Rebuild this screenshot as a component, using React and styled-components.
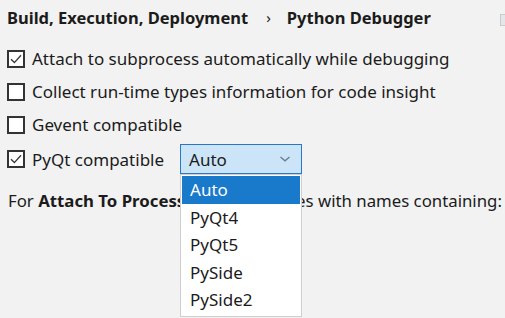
import styled, { createGlobalStyle } from "styled-components"

const GlobalStyle = createGlobalStyle`
  html, body {
    margin: 0;
    padding: 0;
    background: #f2f2f2;
  }
  body {
    font-family: "Noto Sans", "Open Sans", sans-serif;
    color: #1b1b1b;
    overflow: hidden;
  }
`

const options = ["Auto", "PyQt4", "PyQt5", "PySide", "PySide2"]

const Checkbox = ({ checked }) => (
  <Box>
    {checked && (
      <svg width="14" height="14" viewBox="0 0 14 14">
        <path d="M2 7.2 L5.4 10.6 L12 3.2" fill="none" stroke="#3a3a3a" strokeWidth="1.4" />
      </svg>
    )}
  </Box>
)

const App = () => {
  return <Page>
    <GlobalStyle />
    <Header>
      <Crumb>Build, Execution, Deployment</Crumb>
      <Sep>›</Sep>
      <Crumb>Python Debugger</Crumb>
      <Corner />
    </Header>
    <Options>
      <Row>
        <Checkbox checked />
        <Label>Attach to subprocess automatically while debugging</Label>
      </Row>
      <Row>
        <Checkbox />
        <Label>Collect run-time types information for code insight</Label>
      </Row>
      <Row>
        <Checkbox />
        <Label>Gevent compatible</Label>
      </Row>
      <Row tall>
        <Checkbox checked />
        <Label>PyQt compatible</Label>
        <SelectWrap>
          <Select>
            <span>Auto</span>
            <svg width="12" height="8" viewBox="0 0 12 8">
              <path d="M1.5 2 L6 5.8 L10.5 2" fill="none" stroke="#6b7b8b" strokeWidth="1.3" />
            </svg>
          </Select>
          <Menu>
            {options.map((o, i) => (
              <Item key={o} selected={i === 0}>{o}</Item>
            ))}
          </Menu>
        </SelectWrap>
      </Row>
    </Options>
    <Note>
      For <b>Attach To Process</b> show processes with names containing:
    </Note>
  </Page>
}

const Page = styled.div`
  width: 505px;
  height: 318px;
  padding: 5px 0 0 7px;
  box-sizing: border-box;
`

const Header = styled.div`
  display: flex;
  align-items: center;
  height: 24px;
  font-size: 16.5px;
  font-weight: 700;
  position: relative;
`

const Crumb = styled.span`
  white-space: nowrap;
`

const Sep = styled.span`
  font-weight: 400;
  margin: 0 16px 0 18px;
  font-size: 15px;
`

const Corner = styled.div`
  position: absolute;
  right: -4px;
  top: 9px;
  width: 7px;
  height: 10px;
  border: 1px solid #c6cbd0;
  background: #e4e7ea;
`

const Options = styled.div`
  display: flex;
  flex-direction: column;
  margin-top: 13px;
`

const Row = styled.div`
  display: flex;
  align-items: center;
  height: ${p => (p.tall ? 36 : 33)}px;
`

const Box = styled.div`
  width: 14px;
  height: 14px;
  border: 2px solid #333;
  background: #fff;
  display: flex;
  align-items: center;
  justify-content: center;
  flex: none;
`

const Label = styled.span`
  margin-left: 7px;
  font-size: 17px;
  white-space: nowrap;
`

const SelectWrap = styled.div`
  position: relative;
  margin-left: 16px;
`

const Select = styled.div`
  width: 122px;
  height: 30px;
  box-sizing: border-box;
  border: 1px solid #2a77c8;
  background: #cce4f7;
  display: flex;
  align-items: center;
  justify-content: space-between;
  padding: 0 10px 0 8px;
  font-size: 17px;
`

const Menu = styled.div`
  position: absolute;
  top: 30px;
  left: 0;
  width: 122px;
  box-sizing: border-box;
  background: #fff;
  border: 1px solid #cfcfcf;
  padding: 1px 1px 2px;
  z-index: 2;
`

const Item = styled.div`
  height: 27.5px;
  display: flex;
  align-items: center;
  padding-left: 8px;
  font-size: 17px;
  background: ${p => (p.selected ? "#1979ca" : "transparent")};
  color: ${p => (p.selected ? "#fff" : "#1b1b1b")};
`

const Note = styled.div`
  margin-top: 12px;
  margin-left: 1px;
  font-size: 16.8px;
  white-space: nowrap;
  b {
    font-weight: 700;
  }
`

export default App
